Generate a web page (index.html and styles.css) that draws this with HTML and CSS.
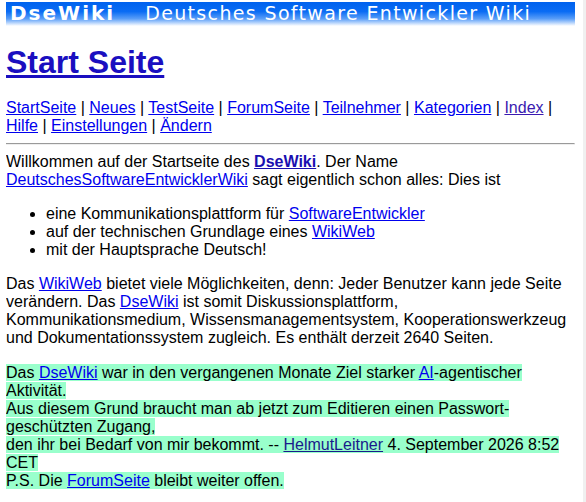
FILE: index.html
```html
<!DOCTYPE html>
<html lang="de">
<head>
<meta charset="utf-8">
<title>Start Seite - DseWiki</title>
<link rel="stylesheet" href="styles.css">
</head>
<body>
<div class="banner"><span class="logo">DseWiki</span><span class="tagline">Deutsches Software Entwickler Wiki</span></div>
<h1 class="title"><a href="#">Start Seite</a></h1>
<p class="nav"><a href="#">StartSeite</a> | <a href="#">Neues</a> | <a href="#">TestSeite</a> | <a href="#">ForumSeite</a> | <a href="#">Teilnehmer</a> | <a href="#">Kategorien</a> | <a href="#" class="visited">Index</a> | <a href="#">Hilfe</a> | <a href="#">Einstellungen</a> | <a href="#">Ändern</a></p>
<hr class="rule">
<p class="intro">Willkommen auf der Startseite des <a href="#" class="strong">DseWiki</a>. Der Name <a href="#">DeutschesSoftwareEntwicklerWiki</a> sagt eigentlich schon alles: Dies ist</p>
<ul class="list">
<li>eine Kommunikationsplattform für <a href="#">SoftwareEntwickler</a></li>
<li>auf der technischen Grundlage eines <a href="#">WikiWeb</a></li>
<li>mit der Hauptsprache Deutsch!</li>
</ul>
<p class="text">Das <a href="#">WikiWeb</a> bietet viele Möglichkeiten, denn: Jeder Benutzer kann jede Seite verändern. Das <a href="#">DseWiki</a> ist somit Diskussionsplattform, Kommunikationsmedium, Wissensmanagementsystem, Kooperationswerkzeug und Dokumentationssystem zugleich. Es enthält derzeit 2640 Seiten.</p>
<p class="text notice"><span class="mark">Das <a href="#">DseWiki</a> war in den vergangenen Monate Ziel starker <a href="#">AI</a>-agentischer Aktivität.<br>Aus diesem Grund braucht man ab jetzt zum Editieren einen Passwort-geschützten Zugang,<br>den ihr bei Bedarf von mir bekommt. -- <a href="#" class="dark">HelmutLeitner</a> 4. September 2026 8:52 CET<br>P.S. Die <a href="#">ForumSeite</a> bleibt weiter offen.</span></p>
</body>
</html>
```
FILE: styles.css
```css
html {
  border-right: 3px solid #f0f0f0;
  background: #fff;
  overflow: hidden;
}
body {
  margin: 2px 8px 0 6px;
  font-family: "Liberation Sans", Arial, sans-serif;
  font-size: 16px;
  line-height: 18px;
  color: #000;
}
a {
  color: #0000ee;
}
a.visited {
  color: #3a1ab0;
}
a.dark {
  color: #1a1a8b;
}
a.strong {
  font-weight: bold;
  color: #1a0fb0;
}
.banner {
  height: 24px;
  margin-left: -1px;
  background: linear-gradient(to bottom, #0062ee 0%, #0a6cf4 40%, #5a9ef8 70%, #ffffff 100%);
  color: #fff;
  white-space: nowrap;
  display: flex;
  align-items: flex-start;
  font-family: "DejaVu Sans", Verdana, sans-serif;
}
.logo {
  font-weight: bold;
  font-size: 20px;
  line-height: 22px;
  letter-spacing: 2px;
  margin-left: 5px;
}
.tagline {
  font-size: 19px;
  line-height: 22px;
  letter-spacing: 1.35px;
  margin-left: 30px;
}
.title {
  font-size: 32px;
  line-height: 37px;
  margin: 18px 0 18px;
}
.title a {
  color: #1a0fc0;
}
.nav {
  margin: 0;
}
.rule {
  margin: 8px 0 8px -1px;
}
.intro {
  margin: 0 0 16px;
}
.list {
  margin: 16px 0;
  padding-left: 40px;
}
.text {
  margin: 16px 0;
}
.notice {
  margin-top: 17px;
}
.mark {
  background: #99ffcc;
}
```
